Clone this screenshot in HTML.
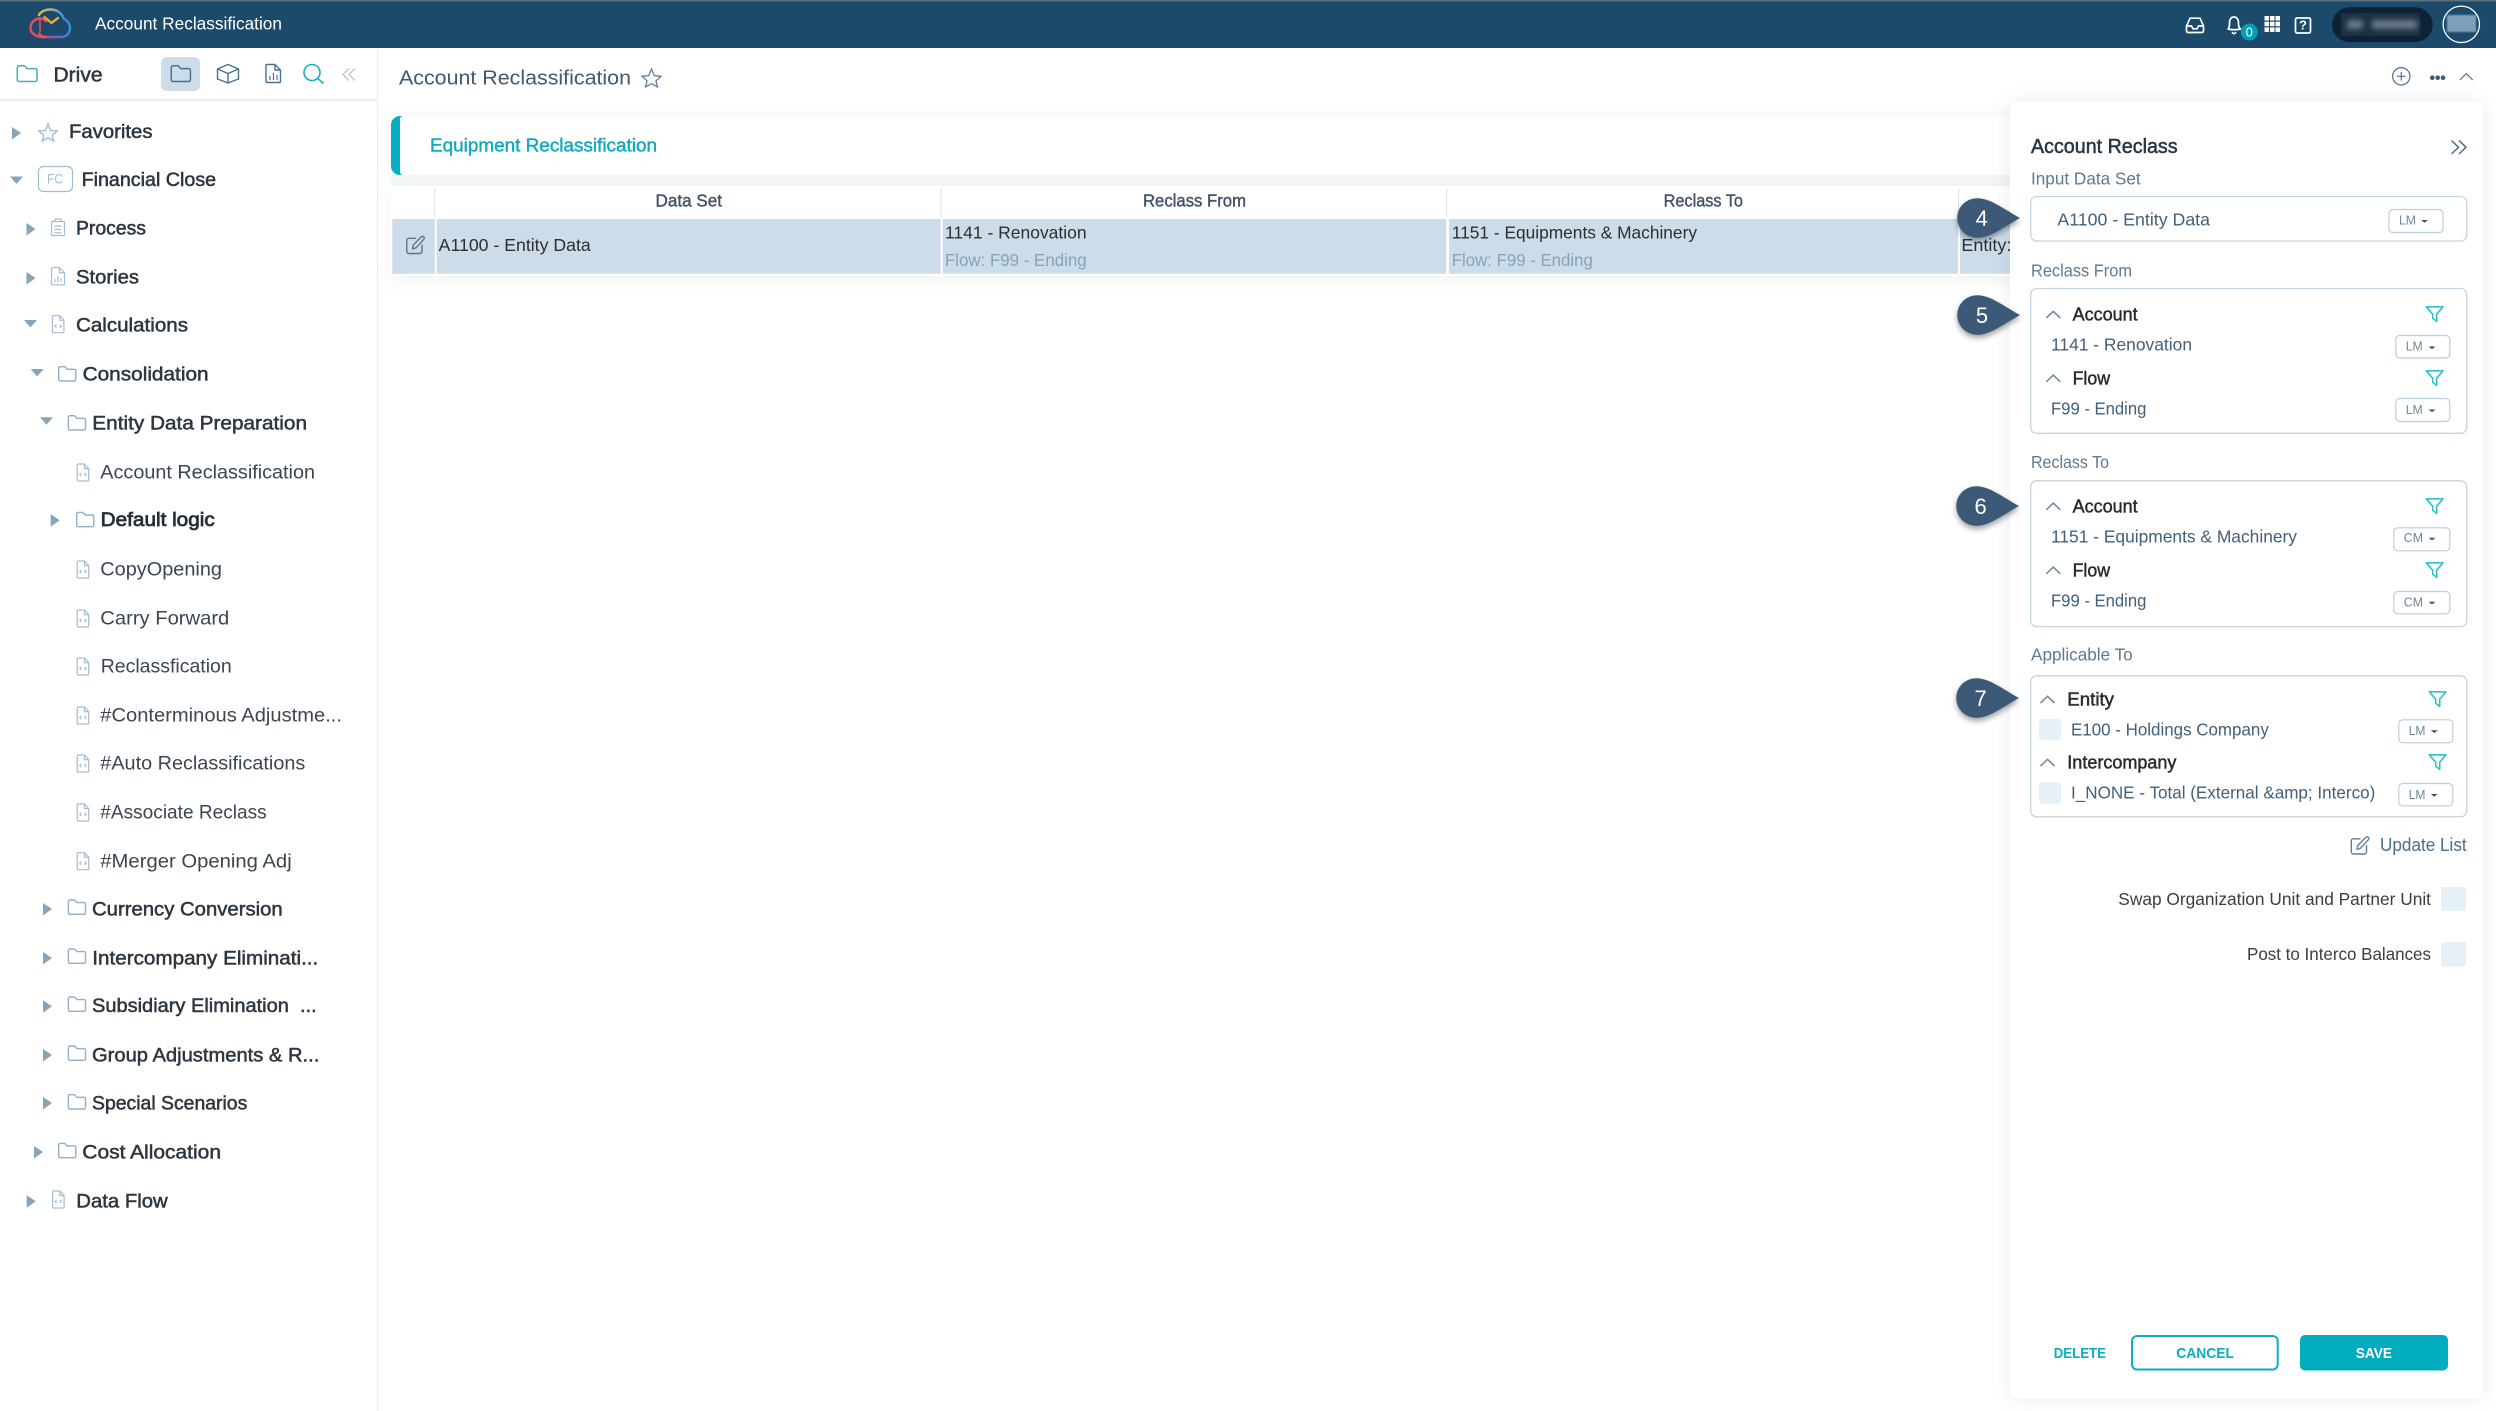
<!DOCTYPE html>
<html lang="en"><head><meta charset="utf-8"><title>Account Reclassification</title>
<style>
html,body{margin:0;padding:0;background:#fff;width:2496px;height:1411px;overflow:hidden}
svg{display:block;position:absolute;left:0;top:0}
text{font-family:"Liberation Sans",sans-serif;white-space:pre;transform:translateY(-.6px)}
.tm{font-size:19.5px;fill:#2b3640;stroke:#2b3640;stroke-width:.5}
.tb{font-size:19.5px;fill:#252f38;stroke:#252f38;stroke-width:.75}
.tr{font-size:19.5px;fill:#3a4652}
.cell{font-size:17.5px;fill:#2e2e2e}
.sub{font-size:17.5px;fill:#86a3b9}
.hd{font-size:17.5px;fill:#3f5269;stroke:#3f5269;stroke-width:.4}
.lab{font-size:17.5px;fill:#5d7a92}
.val{font-size:17.5px;fill:#40617b}
.fld{font-size:18px;fill:#2b2b2b;stroke:#2b2b2b;stroke-width:.45}
.tag{font-size:13px;fill:#6d8799}
.opt{font-size:17.5px;fill:#3d3d3d}
.btn{font-size:15px;font-weight:700;fill:#0aafc2}
.folder{fill:none;stroke:#8fb0c8;stroke-width:1.4}
.doc{fill:none;stroke:#a2bdd2;stroke-width:1.2}
.tbtn{fill:#fff;stroke:#b8cfdc;stroke-width:1.2}
.box{fill:#fff;stroke:#c4d5e1;stroke-width:1.3}
.cb{fill:#e6f0f7}
.ft{fill:none;stroke:#2fc0d0;stroke-width:1.6;stroke-linejoin:round}
.ch{fill:none;stroke:#6f8ea5;stroke-width:1.6}
.ta{fill:#86a5bb}
</style></head><body>
<svg width="2496" height="1411" viewBox="0 0 2496 1411" xmlns="http://www.w3.org/2000/svg">
<defs>
<linearGradient id="lg" x1="0" y1="0" x2="1" y2="0"><stop offset="0" stop-color="#ef4a63"/><stop offset=".5" stop-color="#8f4fc0"/><stop offset="1" stop-color="#2f8fe0"/></linearGradient>
<linearGradient id="lt" x1="0" y1="0" x2="1" y2="0"><stop offset="0" stop-color="#f2b13b"/><stop offset=".5" stop-color="#9fb7a0"/><stop offset="1" stop-color="#2f8fe0"/></linearGradient>
<g id="fo"><path class="folder" d="M.7 2.2A1.5 1.5 0 0 1 2.2.7h4.6l2.4 2.6h7.1a1.5 1.5 0 0 1 1.5 1.5v8.7a1.5 1.5 0 0 1-1.5 1.5H2.2a1.5 1.5 0 0 1-1.5-1.5z"/></g>
<g id="dc"><path class="doc" d="M1.9.7h6.3l4.2 4.6v11.4a1 1 0 0 1-1 1H1.9a1 1 0 0 1-1-1V1.7a1 1 0 0 1 1-1zM8.2.7v4.6h4.2"/><path class="doc" d="M5 9.6 3.4 11.2 5 12.8M8.2 9.6l1.6 1.6-1.6 1.6"/></g>
<g id="ar"><path class="ta" d="M0 0 9 6 0 12.5z"/></g>
<g id="ad"><path class="ta" d="M0 0H13L6.5 7.5z"/></g>
<g id="fi"><path class="ft" d="M.8.8H17.4L11.2 8.2V15.4L7.2 12.4V8.2z"/></g>
<g id="cu"><path class="ch" d="M0 7.5 7 .8 14 7.5"/></g>
<g id="ed"><path fill="none" stroke="currentColor" stroke-width="1.4" d="M10 2.8H2.8A2 2 0 0 0 .8 4.8V16a2 2 0 0 0 2 2H14a2 2 0 0 0 2-2V9"/><path fill="none" stroke="currentColor" stroke-width="1.4" stroke-linejoin="round" d="M6.5 13.5 7.3 9.5 15.2 1.4a1.6 1.6 0 0 1 2.6 2.4L9.9 12.3z"/></g>
<g id="tip"><path d="M0-19.8C13-20 25-10 43 0 25 10 13 20 0 19.8A19.8 19.8 0 0 1 0-19.8z" fill="#3c5a78" style="filter:drop-shadow(0 3px 3px rgba(0,0,0,.38))"/></g>
</defs>

<!-- top bar -->
<rect x="0" y="0" width="2496" height="48" fill="#1c4a6b"/>
<rect x="0" y="0" width="2496" height="1.5" fill="#5f6f78"/>
<g fill="none" stroke-width="2.4" stroke-linecap="round">
<path d="M39 15C41 11 46 9.500 50 9.500 57 9.500 62 13 64 19" stroke="url(#lt)"/>
<path d="M64 19C68 21 70 24.500 70 28 70 33.500 66 37 61 37H47C43 37 41 36 39 34" stroke="url(#lg)"/>
<path d="M46 37C36 38 30.500 33 30.500 28 30.500 22.500 35 18.500 40 18.500 43.500 18.500 45 20 46 21" stroke="#ef4a63"/>
<path d="M40 19V32" stroke="#ef4a63" stroke-width="1.6"/>
<path d="M44.500 17 51.500 23 58 18" stroke="#f3a23a"/>
</g>
<text x="95" y="30" font-size="17.500" fill="#fff" textLength="187" lengthAdjust="spacingAndGlyphs">Account Reclassification</text>

<g fill="none" stroke="#fff" stroke-width="1.7">
<path d="M2190 18.200H2200L2203.500 26V31A1.600 1.600 0 0 1 2201.900 32.500H2188A1.600 1.600 0 0 1 2186.500 31V26z"/>
<path d="M2186.500 26H2191.500L2193 28.800H2197L2198.500 26H2203.500"/>
<path d="M2228 29C2230 26.500 2229.500 24 2229.500 23 2229.500 19.500 2231 17 2234 17 2237 17 2238.500 19.500 2238.500 23 2238.500 24 2238 26.500 2240.500 29 2236 30 2232 30 2228 29z" stroke-linejoin="round"/>
<path d="M2232 32.300Q2234 35 2236 32.300"/>
<rect x="2295.500" y="18" width="15" height="15" rx="1.500"/>
</g>
<circle cx="2249.300" cy="32" r="8.500" fill="#019fb6"/>
<text x="2249.300" y="37" font-size="13" fill="#fff" text-anchor="middle">0</text>
<g fill="#fff">
<rect x="2264.500" y="16" width="4.500" height="4.500"/><rect x="2270" y="16" width="4.500" height="4.500"/><rect x="2275.500" y="16" width="4.500" height="4.500"/>
<rect x="2264.500" y="21.700" width="4.500" height="4.500"/><rect x="2270" y="21.700" width="4.500" height="4.500"/><rect x="2275.500" y="21.700" width="4.500" height="4.500"/>
<rect x="2264.500" y="27.400" width="4.500" height="4.500"/><rect x="2270" y="27.400" width="4.500" height="4.500"/><rect x="2275.500" y="27.400" width="4.500" height="4.500"/>
</g>
<text x="2303" y="30" font-size="13" font-weight="700" fill="#fff" text-anchor="middle">?</text>
<rect x="2332" y="7.300" width="100.700" height="34.700" rx="17.300" fill="#0f2235"/>
<rect x="2341" y="13" width="79" height="23" fill="#1b3042"/>
<rect x="2347" y="20" width="16" height="9" fill="#6c7b87" style="filter:blur(3px)"/>
<rect x="2372" y="20" width="45" height="9" fill="#6c7b87" style="filter:blur(3px)"/>
<circle cx="2461.300" cy="24.300" r="18.200" fill="#1c4a6b" stroke="#fff" stroke-width="1.300"/>
<rect x="2447" y="15" width="29" height="17" fill="#7f9fb9" style="filter:blur(.8px)"/>

<!-- sidebar -->
<rect x="377" y="48" width="1" height="1363" fill="#e8edf3"/>
<rect x="0" y="99.500" width="377" height="1.500" fill="#e3eaf0"/>
<g transform="translate(16.500 65) scale(1.150 1.100)"><path fill="none" stroke="#4da8c4" stroke-width="1.300" d="M.7 2.200A1.500 1.500 0 0 1 2.200.7h4.600l2.400 2.600h7.100a1.500 1.500 0 0 1 1.500 1.500v8.700a1.500 1.500 0 0 1-1.500 1.500H2.200a1.500 1.500 0 0 1-1.500-1.500z"/></g>
<text x="53.500" y="82" font-size="20" fill="#2b3640" stroke="#2b3640" stroke-width=".5" textLength="49" lengthAdjust="spacingAndGlyphs">Drive</text>
<rect x="161" y="57" width="39" height="34" rx="6" fill="#ccdde9"/>
<g transform="translate(170.500 65) scale(1.120 1.100)"><path fill="none" stroke="#47708f" stroke-width="1.300" d="M.7 2.200A1.500 1.500 0 0 1 2.200.7h4.600l2.400 2.600h7.100a1.500 1.500 0 0 1 1.500 1.500v8.700a1.500 1.500 0 0 1-1.500 1.500H2.200a1.500 1.500 0 0 1-1.500-1.500z"/></g>
<g fill="none" stroke="#47708f" stroke-width="1.400" stroke-linejoin="round">
<path d="M228 64.500 238.500 69V79L228 83 217.500 79V69zM217.500 69 228 73.500 238.500 69M228 73.500V83"/>
<path d="M266 65.500A1 1 0 0 1 267 64.500H275L280.500 70V81.500A1 1 0 0 1 279.500 82.500H267A1 1 0 0 1 266 81.500zM275 64.500V70H280.500"/>
<path d="M270 80V76M273.500 80V73M277 80V75" stroke-width="1.200"/>
</g>
<circle cx="312" cy="72.500" r="8" fill="none" stroke="#17aec2" stroke-width="1.600"/>
<path d="M317.800 78.500 323.500 83.500" stroke="#17aec2" stroke-width="1.600" fill="none"/>
<path d="M349 68.500 343 74.500 349 80.500M355 68.500 349 74.500 355 80.500" fill="none" stroke="#a9c0d1" stroke-width="1.200"/>

<use href="#ar" transform="translate(12 127)"/>
<path d="M48 124 50.600 130.500 57.300 131 52.200 135.400 53.800 141 48 137.800 42.200 141 43.800 135.400 38.700 131 45.400 130.500z" fill="none" stroke="#9dbad0" stroke-width="1.300"/>
<text class="tm" x="69" y="138.700" textLength="83.500" lengthAdjust="spacingAndGlyphs">Favorites</text>

<use href="#ad" transform="translate(10 176.500)"/>
<rect x="38.500" y="166.500" width="34" height="25" rx="5" fill="none" stroke="#a2bdd2" stroke-width="1.200"/>
<text x="47" y="184" font-size="14" fill="#a2bdd2" textLength="16" lengthAdjust="spacingAndGlyphs">FC</text>
<text class="tm" x="81.600" y="186.700" textLength="134.500" lengthAdjust="spacingAndGlyphs">Financial Close</text>

<use href="#ar" transform="translate(26.500 223)"/>
<g class="doc"><path class="doc" d="M52.500 221.500H63.500A1 1 0 0 1 64.500 222.500V234.500A1 1 0 0 1 63.500 235.500H52.500A1 1 0 0 1 51.500 234.500V222.500A1 1 0 0 1 52.500 221.500zM55 221.500V219H61V221.500M54.500 226H61.500M54.500 229.500H61.500M54.500 232.800H61.500"/></g>
<text class="tm" x="76" y="235.300" textLength="70" lengthAdjust="spacingAndGlyphs">Process</text>

<use href="#ar" transform="translate(26.500 272)"/>
<path class="doc" d="M52.500 267.700H59.500L64.500 272.700V283.800A1 1 0 0 1 63.500 284.800H52.500A1 1 0 0 1 51.500 283.800V268.700A1 1 0 0 1 52.500 267.700zM59.500 267.700V272.700H64.500M55 282V279M58 282V276M61 282V278"/>
<text class="tm" x="76" y="284.300" textLength="63" lengthAdjust="spacingAndGlyphs">Stories</text>

<use href="#ad" transform="translate(24 320)"/>
<use href="#dc" transform="translate(51.500 315)"/>
<text class="tm" x="76" y="332" textLength="112" lengthAdjust="spacingAndGlyphs">Calculations</text>

<use href="#ad" transform="translate(30.600 369)"/>
<use href="#fo" transform="translate(58 366)"/>
<text class="tm" x="82.600" y="381.300" textLength="126" lengthAdjust="spacingAndGlyphs">Consolidation</text>

<use href="#ad" transform="translate(40 417.300)"/>
<use href="#fo" transform="translate(67.700 415)"/>
<text class="tm" x="92.300" y="430" textLength="214.700" lengthAdjust="spacingAndGlyphs">Entity Data Preparation</text>

<use href="#dc" transform="translate(76.300 463.300)"/>
<text class="tr" x="100.300" y="479.300" textLength="214.700" lengthAdjust="spacingAndGlyphs">Account Reclassification</text>

<use href="#ar" transform="translate(50.700 514.300)"/>
<use href="#fo" transform="translate(76 511.700)"/>
<text class="tb" x="100.700" y="526.700" textLength="114" lengthAdjust="spacingAndGlyphs">Default logic</text>

<use href="#dc" transform="translate(76.300 560.300)"/>
<text class="tr" x="100.300" y="576" textLength="121.700" lengthAdjust="spacingAndGlyphs">CopyOpening</text>
<use href="#dc" transform="translate(76.300 609.300)"/>
<text class="tr" x="100.300" y="625" textLength="129" lengthAdjust="spacingAndGlyphs">Carry Forward</text>
<use href="#dc" transform="translate(76.300 657.300)"/>
<text class="tr" x="100.700" y="673" textLength="131" lengthAdjust="spacingAndGlyphs">Reclassfication</text>
<use href="#dc" transform="translate(76.300 706.300)"/>
<text class="tr" x="100.300" y="722" textLength="241.700" lengthAdjust="spacingAndGlyphs">#Conterminous Adjustme...</text>
<use href="#dc" transform="translate(76.300 754.300)"/>
<text class="tr" x="100.300" y="770" textLength="205" lengthAdjust="spacingAndGlyphs">#Auto Reclassifications</text>
<use href="#dc" transform="translate(76.300 803.300)"/>
<text class="tr" x="100.300" y="819" textLength="166.400" lengthAdjust="spacingAndGlyphs">#Associate Reclass</text>
<use href="#dc" transform="translate(76.300 852)"/>
<text class="tr" x="100.300" y="868.300" textLength="191.400" lengthAdjust="spacingAndGlyphs">#Merger Opening Adj</text>

<use href="#ar" transform="translate(43 903)"/>
<use href="#fo" transform="translate(67.700 899.300)"/>
<text class="tm" x="92" y="916" textLength="190.700" lengthAdjust="spacingAndGlyphs">Currency Conversion</text>
<use href="#ar" transform="translate(43 952)"/>
<use href="#fo" transform="translate(67.700 948.300)"/>
<text class="tm" x="92.300" y="965" textLength="226" lengthAdjust="spacingAndGlyphs">Intercompany Eliminati...</text>
<use href="#ar" transform="translate(43 1000.300)"/>
<use href="#fo" transform="translate(67.700 996.300)"/>
<text class="tm" x="92" y="1012.700" textLength="224.700" lengthAdjust="spacingAndGlyphs">Subsidiary Elimination  ...</text>
<use href="#ar" transform="translate(43 1049)"/>
<use href="#fo" transform="translate(67.700 1045.300)"/>
<text class="tm" x="92" y="1062" textLength="227.300" lengthAdjust="spacingAndGlyphs">Group Adjustments &amp; R...</text>
<use href="#ar" transform="translate(43 1097)"/>
<use href="#fo" transform="translate(67.700 1094)"/>
<text class="tm" x="92" y="1110" textLength="155.300" lengthAdjust="spacingAndGlyphs">Special Scenarios</text>
<use href="#ar" transform="translate(34 1146)"/>
<use href="#fo" transform="translate(58 1142.700)"/>
<text class="tm" x="82.300" y="1159" textLength="138.700" lengthAdjust="spacingAndGlyphs">Cost Allocation</text>
<use href="#ar" transform="translate(26.700 1195.300)"/>
<use href="#dc" transform="translate(51.700 1190.300)"/>
<text class="tm" x="76.300" y="1208" textLength="91.400" lengthAdjust="spacingAndGlyphs">Data Flow</text>

<!-- page title -->
<text x="399" y="85" font-size="20" fill="#3f5a70" textLength="232" lengthAdjust="spacingAndGlyphs">Account Reclassification</text>
<path d="M651.500 69 654.300 75.700 661 76.300 656 80.800 657.500 87 651.500 83.700 645.500 87 647 80.800 642 76.300 648.700 75.700z" fill="none" stroke="#5f7f98" stroke-width="1.300"/>
<circle cx="2401.300" cy="76.300" r="8.700" fill="none" stroke="#4f7391" stroke-width="1.200"/>
<path d="M2401.300 72V80.600M2397 76.300H2405.600" stroke="#4f7391" stroke-width="1.200"/>
<circle cx="2432.300" cy="77.700" r="2.300" fill="#3f5a70"/><circle cx="2437.700" cy="77.700" r="2.300" fill="#3f5a70"/><circle cx="2443" cy="77.700" r="2.300" fill="#3f5a70"/>
<path d="M2460 80 2466.300 73.500 2472.700 80" fill="none" stroke="#4f7391" stroke-width="1.200"/>

<!-- card -->
<rect x="391" y="116" width="1640" height="59" rx="9" fill="#fff" style="filter:drop-shadow(0 0 8px rgba(60,90,120,.07))"/>
<rect x="391" y="116" width="30" height="59" rx="9" fill="#05aec2"/>
<rect x="400" y="116" width="1620" height="59" rx="3" fill="#fff"/>
<text x="430" y="152" font-size="18.500" fill="#10abbf" stroke="#10abbf" stroke-width=".45" textLength="227" lengthAdjust="spacingAndGlyphs">Equipment Reclassification</text>
<rect x="391" y="175" width="1640" height="11" fill="#f4f6f8"/>

<!-- table -->
<rect x="391" y="186" width="1640" height="90" fill="#fff" style="filter:drop-shadow(0 4px 8px rgba(60,90,120,.08))"/>
<g fill="#dfe6ec"><rect x="434" y="188" width="1.200" height="29"/><rect x="940.300" y="188" width="1.200" height="29"/><rect x="1446" y="188" width="1.200" height="29"/><rect x="1958" y="188" width="1.200" height="29"/></g>
<g fill="#ccdde9"><rect x="392.300" y="219" width="42.500" height="54.800"/><rect x="436.600" y="219" width="504.100" height="54.800"/><rect x="942.700" y="219" width="503.500" height="54.800"/><rect x="1449" y="219" width="509" height="54.800"/><rect x="1960" y="219" width="60" height="54.800"/></g>
<use href="#ed" transform="translate(406 235.500)" style="color:#5f7487"/>
<text class="hd" x="655.500" y="207" textLength="66.500" lengthAdjust="spacingAndGlyphs">Data Set</text>
<text class="hd" x="1143" y="207" textLength="103" lengthAdjust="spacingAndGlyphs">Reclass From</text>
<text class="hd" x="1663.600" y="207" textLength="79.400" lengthAdjust="spacingAndGlyphs">Reclass To</text>
<text class="cell" x="438.700" y="251.700" textLength="152" lengthAdjust="spacingAndGlyphs">A1100 - Entity Data</text>
<text class="cell" x="945" y="239" textLength="141.600" lengthAdjust="spacingAndGlyphs">1141 - Renovation</text>
<text class="sub" x="945" y="266.700" textLength="141.600" lengthAdjust="spacingAndGlyphs">Flow: F99 - Ending</text>
<text class="cell" x="1451.800" y="239" textLength="245.200" lengthAdjust="spacingAndGlyphs">1151 - Equipments &amp; Machinery</text>
<text class="sub" x="1451.800" y="266.700" textLength="141" lengthAdjust="spacingAndGlyphs">Flow: F99 - Ending</text>
<text class="cell" x="1961.400" y="251.700" textLength="50" lengthAdjust="spacingAndGlyphs">Entity:</text>

<!-- panel -->
<rect x="2010" y="102" width="473" height="1296.600" rx="8" fill="#fff" style="filter:drop-shadow(0 0 9px rgba(60,90,120,.12))"/>
<text x="2031" y="153.500" font-size="20" fill="#253746" stroke="#253746" stroke-width=".5" textLength="146.600" lengthAdjust="spacingAndGlyphs">Account Reclass</text>
<path d="M2451.500 140.500 2458.500 147.300 2451.500 154M2459 140.500 2466 147.300 2459 154" fill="none" stroke="#47708f" stroke-width="1.500"/>

<text class="lab" x="2031" y="185" textLength="109.700" lengthAdjust="spacingAndGlyphs">Input Data Set</text>
<rect class="box" x="2030.700" y="196.500" width="436" height="44.500" rx="6"/>
<text class="val" x="2057.400" y="226" font-size="18" textLength="152.600" lengthAdjust="spacingAndGlyphs">A1100 - Entity Data</text>
<rect class="tbtn" x="2389" y="209.500" width="54" height="23" rx="4"/>
<text class="tag" x="2399" y="225" textLength="17" lengthAdjust="spacingAndGlyphs">LM</text>
<path d="M2421 220H2428L2424.500 222.800z" fill="#3f5269"/>

<text class="lab" x="2031" y="277" textLength="101" lengthAdjust="spacingAndGlyphs">Reclass From</text>
<rect class="box" x="2030.700" y="288.500" width="436" height="144.800" rx="6"/>
<use href="#cu" transform="translate(2046.300 310.500)"/>
<text class="fld" x="2072.600" y="321" textLength="65" lengthAdjust="spacingAndGlyphs">Account</text>
<use href="#fi" transform="translate(2425.500 306)"/>
<text class="val" x="2051" y="351.300" textLength="141" lengthAdjust="spacingAndGlyphs">1141 - Renovation</text>
<rect class="tbtn" x="2395.800" y="335.500" width="54" height="22.500" rx="4"/>
<text class="tag" x="2405.700" y="351" textLength="17" lengthAdjust="spacingAndGlyphs">LM</text>
<path d="M2428.500 346.500H2435.500L2432 349.300z" fill="#3f5269"/>
<use href="#cu" transform="translate(2046.300 374.300)"/>
<text class="fld" x="2072.600" y="385" textLength="37.400" lengthAdjust="spacingAndGlyphs">Flow</text>
<use href="#fi" transform="translate(2425.500 370)"/>
<text class="val" x="2051" y="415.300" textLength="95.400" lengthAdjust="spacingAndGlyphs">F99 - Ending</text>
<rect class="tbtn" x="2395.800" y="398.500" width="54" height="23" rx="4"/>
<text class="tag" x="2405.700" y="414.500" textLength="17" lengthAdjust="spacingAndGlyphs">LM</text>
<path d="M2428.500 409.500H2435.500L2432 412.300z" fill="#3f5269"/>

<text class="lab" x="2031" y="468.800" textLength="78" lengthAdjust="spacingAndGlyphs">Reclass To</text>
<rect class="box" x="2030.700" y="480.800" width="436" height="145.800" rx="6"/>
<use href="#cu" transform="translate(2046.300 502.300)"/>
<text class="fld" x="2072.600" y="513" textLength="65" lengthAdjust="spacingAndGlyphs">Account</text>
<use href="#fi" transform="translate(2425.500 498)"/>
<text class="val" x="2051" y="543" textLength="246" lengthAdjust="spacingAndGlyphs">1151 - Equipments &amp; Machinery</text>
<rect class="tbtn" x="2393.800" y="527.800" width="56" height="23" rx="4"/>
<text class="tag" x="2403.800" y="542.700" textLength="19.200" lengthAdjust="spacingAndGlyphs">CM</text>
<path d="M2428.500 537.700H2435.500L2432 540.500z" fill="#3f5269"/>
<use href="#cu" transform="translate(2046.300 566.300)"/>
<text class="fld" x="2072.600" y="577" textLength="37.400" lengthAdjust="spacingAndGlyphs">Flow</text>
<use href="#fi" transform="translate(2425.500 562)"/>
<text class="val" x="2051" y="607" textLength="95.400" lengthAdjust="spacingAndGlyphs">F99 - Ending</text>
<rect class="tbtn" x="2393.800" y="591.500" width="56" height="22.300" rx="4"/>
<text class="tag" x="2403.800" y="607" textLength="19.200" lengthAdjust="spacingAndGlyphs">CM</text>
<path d="M2428.500 601.700H2435.500L2432 604.500z" fill="#3f5269"/>

<text class="lab" x="2031" y="661" textLength="101.700" lengthAdjust="spacingAndGlyphs">Applicable To</text>
<rect class="box" x="2030.700" y="675.800" width="436" height="141" rx="6"/>
<use href="#cu" transform="translate(2040.500 695.500)"/>
<text class="fld" x="2067.300" y="706" textLength="46.700" lengthAdjust="spacingAndGlyphs">Entity</text>
<use href="#fi" transform="translate(2428.500 691)"/>
<rect class="cb" x="2039" y="719" width="22" height="21" rx="3"/>
<text class="val" x="2071" y="736" textLength="197.800" lengthAdjust="spacingAndGlyphs">E100 - Holdings Company</text>
<rect class="tbtn" x="2398.800" y="719.800" width="54" height="23" rx="4"/>
<text class="tag" x="2408.700" y="735.500" textLength="16.800" lengthAdjust="spacingAndGlyphs">LM</text>
<path d="M2430.800 730.300H2437.800L2434.300 733.100z" fill="#3f5269"/>
<use href="#cu" transform="translate(2040.500 758.500)"/>
<text class="fld" x="2067.300" y="769" textLength="109.100" lengthAdjust="spacingAndGlyphs">Intercompany</text>
<use href="#fi" transform="translate(2428.500 754)"/>
<rect class="cb" x="2039" y="782.300" width="22" height="21.400" rx="3"/>
<text class="val" x="2071" y="799.300" textLength="304.300" lengthAdjust="spacingAndGlyphs">I_NONE - Total (External &amp;amp; Interco)</text>
<rect class="tbtn" x="2398.800" y="783.500" width="54" height="22.300" rx="4"/>
<text class="tag" x="2408.700" y="799.500" textLength="16.800" lengthAdjust="spacingAndGlyphs">LM</text>
<path d="M2430.800 794H2437.800L2434.300 796.800z" fill="#3f5269"/>

<use href="#ed" transform="translate(2350.500 836)" style="color:#5f7f98"/>
<text x="2380" y="851.700" font-size="18" fill="#4c6d87" textLength="86.700" lengthAdjust="spacingAndGlyphs">Update List</text>

<text class="opt" x="2118.300" y="905.500" textLength="312.700" lengthAdjust="spacingAndGlyphs">Swap Organization Unit and Partner Unit</text>
<rect class="cb" x="2441" y="887" width="25" height="24" rx="2"/>
<text class="opt" x="2247" y="960.500" textLength="184" lengthAdjust="spacingAndGlyphs">Post to Interco Balances</text>
<rect class="cb" x="2441" y="942" width="25" height="24.300" rx="2"/>

<text class="btn" x="2053.700" y="1358.500" textLength="52.300" lengthAdjust="spacingAndGlyphs">DELETE</text>
<rect x="2132" y="1336" width="145.700" height="33.500" rx="5" fill="#fff" stroke="#0aafc2" stroke-width="2"/>
<text class="btn" x="2176.300" y="1358.500" textLength="57.700" lengthAdjust="spacingAndGlyphs">CANCEL</text>
<rect x="2300" y="1335" width="148" height="35.500" rx="5" fill="#02acbf"/>
<text class="btn" x="2355.700" y="1358.500" style="fill:#fff" textLength="36.300" lengthAdjust="spacingAndGlyphs">SAVE</text>

<!-- callouts -->
<use href="#tip" transform="translate(1977 218)"/>
<text x="1981.700" y="226.500" font-size="22" fill="#fff" text-anchor="middle">4</text>
<use href="#tip" transform="translate(1977 315)"/>
<text x="1982" y="323.500" font-size="22" fill="#fff" text-anchor="middle">5</text>
<use href="#tip" transform="translate(1976 506)"/>
<text x="1980.600" y="514.500" font-size="22" fill="#fff" text-anchor="middle">6</text>
<use href="#tip" transform="translate(1976 698)"/>
<text x="1980.600" y="706.500" font-size="22" fill="#fff" text-anchor="middle">7</text>
</svg>
</body></html>
